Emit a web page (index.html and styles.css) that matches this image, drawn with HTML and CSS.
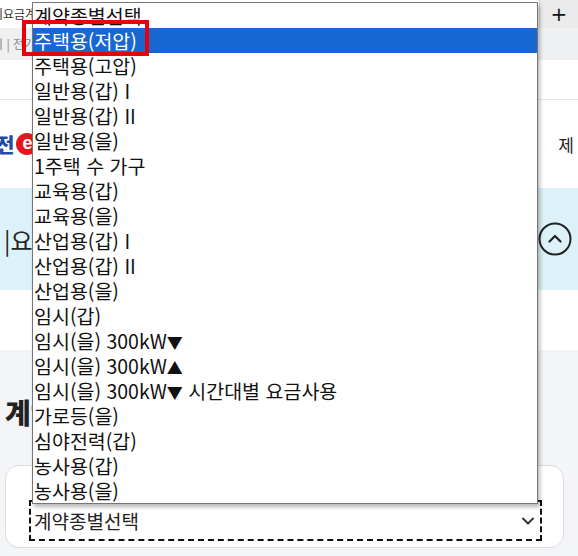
FILE: index.html
```html
<!DOCTYPE html>
<html lang="ko">
<head>
  <meta charset="UTF-8">
  <meta name="viewport" content="width=device-width, initial-scale=1.0">
  <title>계약종별선택</title>
  <link rel="stylesheet" href="styles.css">
</head>
<body>
  <div class="page">
    <div class="tabbar">
      <div class="tab-title">기요금계산기</div>
      <div class="tab-add">+</div>
    </div>
    <div class="crumbs">니 | 전기요금</div>
    <div class="strip"></div>

    <div class="header">
      <div class="logo"><span class="logo-text">전</span><span class="logo-e">e</span></div>
      <div class="menu">제</div>
    </div>

    <div class="hero">
      <div class="hero-title">|요금계산</div>
      <svg class="hero-toggle" width="34" height="34" viewBox="0 0 34 34">
        <circle cx="17" cy="17" r="15.5" fill="none" stroke="#222" stroke-width="2"/>
        <path d="M11.5 19.5 L17 14 L22.5 19.5" fill="none" stroke="#222" stroke-width="2.2" stroke-linecap="round" stroke-linejoin="round"/>
      </svg>
    </div>

    <div class="gap"></div>

    <div class="content">
      <h2 class="section-title">계약종별 선택</h2>
      <div class="card">
        <div class="select-box">
          <span>계약종별선택</span>
          <svg width="14" height="10" viewBox="0 0 14 10">
            <path d="M2 2.5 L7 7.5 L12 2.5" fill="none" stroke="#333" stroke-width="2" stroke-linecap="round" stroke-linejoin="round"/>
          </svg>
        </div>
      </div>
    </div>
  </div>

  <ul class="dropdown">
    <li>계약종별선택</li>
    <li class="selected">주택용(저압)</li>
    <li>주택용(고압)</li>
    <li>일반용(갑) I</li>
    <li>일반용(갑) II</li>
    <li>일반용(을)</li>
    <li>1주택 수 가구</li>
    <li>교육용(갑)</li>
    <li>교육용(을)</li>
    <li>산업용(갑) I</li>
    <li>산업용(갑) II</li>
    <li>산업용(을)</li>
    <li>임시(갑)</li>
    <li>임시(을) 300kW<span class="tri">▼</span></li>
    <li>임시(을) 300kW<span class="tri">▲</span></li>
    <li>임시(을) 300kW<span class="tri">▼</span> 시간대별 요금사용</li>
    <li>가로등(을)</li>
    <li>심야전력(갑)</li>
    <li>농사용(갑)</li>
    <li>농사용(을)</li>
  </ul>

  <div class="highlight-box"></div>
</body>
</html>
```

FILE: styles.css
```css
body {
  margin: 0;
  width: 578px;
  height: 556px;
  overflow: hidden;
  position: relative;
  font-family: "Noto Sans CJK KR", "Noto Sans", sans-serif;
  color: #111;
  background: #f4f5f7;
}

.page {
  display: flex;
  flex-direction: column;
}

.tabbar {
  display: flex;
  height: 28px;
  background: #fff;
}

.tab-title {
  flex: 1;
  margin-left: -8px;
  font-size: 12px;
  line-height: 28px;
  color: #333;
  white-space: nowrap;
  overflow: hidden;
}

.tab-add {
  width: 38px;
  background: #ebebeb;
  border-left: 1px solid #d0d0d0;
  text-align: center;
  font-family: "DejaVu Sans", sans-serif;
  font-size: 20px;
  line-height: 28px;
  color: #111;
}

.crumbs {
  height: 32px;
  line-height: 32px;
  background: #eef0f1;
  margin-left: -8px;
  font-size: 12px;
  color: #888;
  white-space: nowrap;
}

.strip {
  height: 39px;
  background: #fff;
  border-bottom: 1px solid #e6e6e6;
}

.header {
  display: flex;
  justify-content: space-between;
  align-items: center;
  height: 88px;
  background: #fff;
  padding-right: 4px;
}

.logo {
  display: flex;
  align-items: center;
  gap: 2px;
  margin-left: -4px;
}

.logo-text {
  font-size: 20px;
  font-weight: 900;
  color: #1b4ea3;
}

.logo-e {
  display: inline-block;
  width: 22px;
  height: 22px;
  border-radius: 50%;
  background: #e5161c;
  color: #fff;
  font-family: "Liberation Sans", sans-serif;
  font-weight: bold;
  font-size: 18px;
  line-height: 21px;
  text-align: center;
}

.menu {
  font-size: 17px;
  color: #222;
}

.hero {
  display: flex;
  justify-content: space-between;
  align-items: center;
  height: 102px;
  padding: 0 6px 0 4px;
  background: #ddf1f8;
}

.hero-title {
  font-size: 24px;
  color: #222;
  white-space: nowrap;
}

.gap {
  height: 60px;
  background: #fff;
}

.content {
  padding: 45px 14px 8px 5px;
}

.section-title {
  margin: 0 0 36px;
  font-size: 28px;
  font-weight: 900;
  line-height: 34px;
  color: #222;
}

.card {
  background: #fff;
  border: 1.5px solid #d9dce1;
  border-radius: 14px;
  padding: 34px 21px 6px 23px;
}

.select-box {
  display: flex;
  justify-content: space-between;
  align-items: center;
  height: 37px;
  padding: 0 5px 0 3px;
  border: 2px dashed #111;
  font-size: 19px;
  color: #222;
}

.dropdown {
  position: absolute;
  left: 32px;
  top: 2px;
  width: 504px;
  margin: 0;
  padding: 0;
  list-style: none;
  background: #fff;
  border: 1px solid #767676;
  box-shadow: 2px 3px 4px rgba(0, 0, 0, 0.28);
}

.dropdown li {
  height: 25px;
  line-height: 25px;
  padding-left: 1px;
  font-size: 19.5px;
  color: #111;
  white-space: nowrap;
}

.dropdown .tri {
  font-size: 16px;
}

.dropdown li.selected {
  background: #1967d2;
  color: #fff;
}

.highlight-box {
  position: absolute;
  left: 22px;
  top: 20px;
  width: 119px;
  height: 28px;
  border: 4px solid #e8000b;
}
```
